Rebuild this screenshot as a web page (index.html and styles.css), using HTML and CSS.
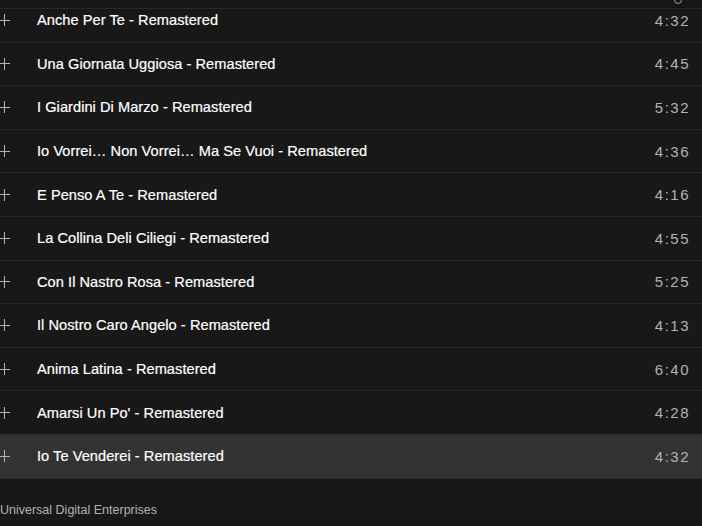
FILE: index.html
```html
<!DOCTYPE html>
<html lang="en">

<head>
    <meta charset="UTF-8" />
    <meta name="viewport" content="width=device-width, initial-scale=1.0" />
    <title>Tracklist</title>
    <link rel="stylesheet" href="styles.css">
</head>

<body>
    <div class="sticky-head">
        <span class="clock"></span>
    </div>

    <ol class="tracks">
        <li class="track"><span class="add"></span><span class="name">Anche Per Te - Remastered</span><span class="time">4:32</span></li>
        <li class="track"><span class="add"></span><span class="name">Una Giornata Uggiosa - Remastered</span><span class="time">4:45</span></li>
        <li class="track"><span class="add"></span><span class="name">I Giardini Di Marzo - Remastered</span><span class="time">5:32</span></li>
        <li class="track"><span class="add"></span><span class="name">Io Vorrei… Non Vorrei… Ma Se Vuoi - Remastered</span><span class="time">4:36</span></li>
        <li class="track"><span class="add"></span><span class="name">E Penso A Te - Remastered</span><span class="time">4:16</span></li>
        <li class="track"><span class="add"></span><span class="name">La Collina Deli Ciliegi - Remastered</span><span class="time">4:55</span></li>
        <li class="track"><span class="add"></span><span class="name">Con Il Nastro Rosa - Remastered</span><span class="time">5:25</span></li>
        <li class="track"><span class="add"></span><span class="name">Il Nostro Caro Angelo - Remastered</span><span class="time">4:13</span></li>
        <li class="track"><span class="add"></span><span class="name">Anima Latina - Remastered</span><span class="time">6:40</span></li>
        <li class="track"><span class="add"></span><span class="name">Amarsi Un Po' - Remastered</span><span class="time">4:28</span></li>
        <li class="track active"><span class="add"></span><span class="name">Io Te Venderei - Remastered</span><span class="time">4:32</span></li>
    </ol>

    <p class="label">Universal Digital Enterprises</p>
</body>

</html>
```

FILE: styles.css
```css
body {
    margin: 0;
    background-color: #181818;
    color: #fff;
    font-family: "Liberation Sans", Arial, sans-serif;
    overflow: hidden;
}

/* header scrolled mostly out of view, sits over the list */
.sticky-head {
    position: absolute;
    top: 0;
    left: 0;
    right: 0;
    height: 8px;
    background-color: #161616;
    border-bottom: 1px solid #282828;
}

.clock {
    position: absolute;
    right: 20px;
    top: -4px;
    width: 6px;
    height: 6px;
    border-radius: 50%;
    border: 1px solid #9a9a9a;
}

.tracks {
    list-style: none;
    margin: -1px 0 0 0;
    padding: 0;
}

.track {
    display: flex;
    align-items: center;
    height: 42.6px;
    border-bottom: 1px solid #282828;
}

.track.active {
    background-color: #333333;
}

.add {
    position: relative;
    flex: 0 0 auto;
    width: 12px;
    height: 12px;
    margin-left: -2px;
    margin-right: 27px;
}

.add::before,
.add::after {
    content: "";
    position: absolute;
    background-color: #b3b3b3;
}

.add::before {
    left: 0;
    right: 0;
    top: 5.5px;
    height: 1px;
}

.add::after {
    top: 0;
    bottom: 0;
    left: 5.5px;
    width: 1px;
}

.name {
    flex: 1;
    font-size: 14.6px;
    letter-spacing: 0.05px;
    -webkit-text-stroke: 0.2px #fff;
}

.time {
    color: #b3b3b3;
    font-size: 15px;
    letter-spacing: 1.5px;
    margin-right: 12px;
}

.label {
    margin: 24px 0 0 0;
    font-size: 12.5px;
    color: #b3b3b3;
}
```
